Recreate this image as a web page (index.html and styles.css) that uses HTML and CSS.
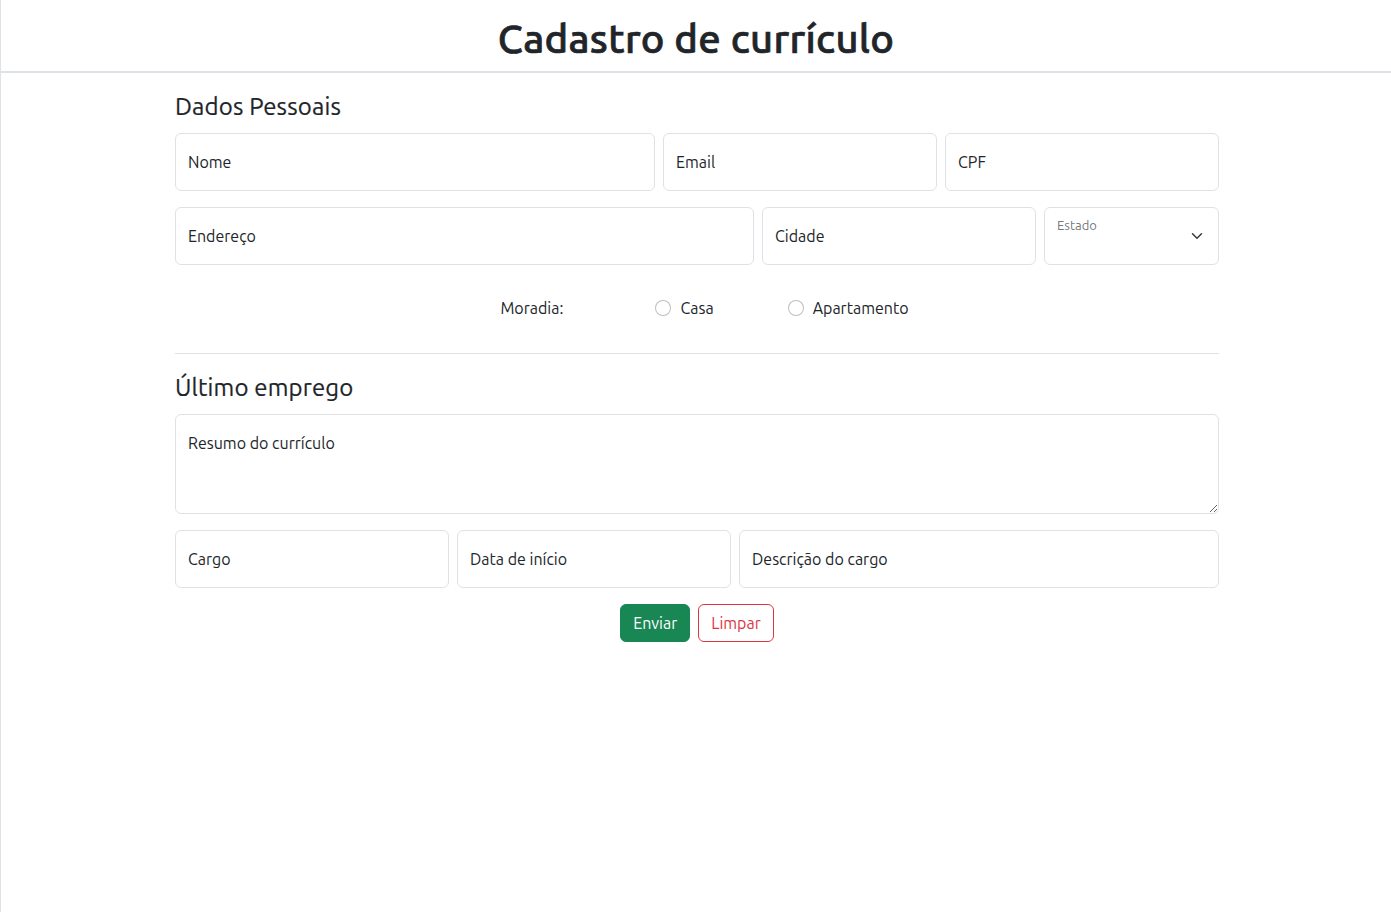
FILE: index.html
```html
<!DOCTYPE html>
<html lang="pt-BR">
<head>
<meta charset="utf-8">
<title>Cadastro de currículo</title>
<link rel="stylesheet" href="styles.css">
</head>
<body>
<header class="page-header">
  <h1 class="page-title">Cadastro de currículo</h1>
</header>
<main class="container">
  <form class="cv-form">
    <section class="section">
      <h4 class="section-title">Dados Pessoais</h4>
      <div class="row row-a">
        <input class="field" type="text" placeholder="Nome">
        <input class="field" type="email" placeholder="Email">
        <input class="field" type="text" placeholder="CPF">
      </div>
      <div class="row row-b">
        <input class="field" type="text" placeholder="Endereço">
        <input class="field" type="text" placeholder="Cidade">
        <div class="select-wrap">
          <select class="field select" aria-label="Estado">
            <option value=""></option>
          </select>
          <span class="select-label">Estado</span>
          <svg class="chevron" width="16" height="12" viewBox="0 0 16 16" aria-hidden="true"><path d="m2 5 6 6 6-6" fill="none" stroke="#343a40" stroke-width="2" stroke-linecap="round" stroke-linejoin="round"/></svg>
        </div>
      </div>
      <div class="moradia">
        <span class="moradia-label">Moradia:</span>
        <label class="check check-casa"><input class="radio" type="radio" name="moradia"> Casa</label>
        <label class="check"><input class="radio" type="radio" name="moradia"> Apartamento</label>
      </div>
    </section>
    <hr class="divider">
    <section class="section">
      <h4 class="section-title">Último emprego</h4>
      <textarea class="field textarea" placeholder="Resumo do currículo"></textarea>
      <div class="row row-c">
        <input class="field" type="text" placeholder="Cargo">
        <input class="field" type="text" placeholder="Data de início">
        <input class="field" type="text" placeholder="Descrição do cargo">
      </div>
      <div class="actions">
        <button type="submit" class="btn btn-success">Enviar</button>
        <button type="reset" class="btn btn-outline-danger">Limpar</button>
      </div>
    </section>
  </form>
</main>
</body>
</html>
```
FILE: styles.css
```css
* { box-sizing: border-box; }

html, body { height: 100%; }

body {
  margin: 0;
  border-left: 1px solid #dee2e6;
  font-family: "Ubuntu", Roboto, "Noto Sans", sans-serif;
  font-size: 16px;
  color: #212529;
  background: #fff;
}

.page-header {
  border-bottom: 2px solid #dee2e6;
  padding: 15px 0 8px;
  text-align: center;
}

.page-title {
  margin: 0;
  font-size: 40px;
  line-height: 48px;
  font-weight: 500;
  letter-spacing: 0.3px;
  -webkit-text-stroke: 0.7px #212529;
}

.container {
  width: 1044px;
  margin: 0 auto;
  position: relative;
  left: 1px;
}

.section-title {
  margin: 0 0 12px;
  font-size: 24px;
  line-height: 29px;
  font-weight: 400;
  letter-spacing: 0.15px;
  -webkit-text-stroke: 0.2px #212529;
}

.section:first-child { padding-top: 19px; }

.row {
  display: grid;
  gap: 8px;
  margin-bottom: 16px;
}
.row-a { grid-template-columns: 480px 274px 274px; }
.row-b { grid-template-columns: 579px 274px 175px; }
.row-c { grid-template-columns: 274px 274px 480px; }

.field {
  display: block;
  width: 100%;
  height: 58px;
  padding: 0 12px;
  border: 1px solid #dee2e6;
  border-radius: 6px;
  font-family: inherit;
  font-size: 16px;
  color: #212529;
  background: #fff;
  outline: none;
}
.field::placeholder { color: #212529; opacity: 1; }

.select-wrap { position: relative; }
.select {
  appearance: none;
  -webkit-appearance: none;
}
.select-label {
  position: absolute;
  left: 13px;
  top: 10px;
  font-size: 13px;
  line-height: 16px;
  color: rgba(33, 37, 41, 0.65);
  pointer-events: none;
}
.chevron {
  position: absolute;
  right: 14px;
  top: 23px;
  pointer-events: none;
}

.moradia {
  display: flex;
  align-items: center;
  justify-content: center;
  height: 54px;
  padding-left: 15px;
}
.moradia-label { margin-right: 92px; }
.check {
  display: flex;
  align-items: center;
  gap: 9px;
}
.check-casa { margin-right: 74px; }
.radio {
  appearance: none;
  -webkit-appearance: none;
  width: 16px;
  height: 16px;
  margin: 0;
  border: 1px solid rgba(0, 0, 0, 0.25);
  border-radius: 50%;
  background: #fff;
}

.divider {
  margin: 18px 0 19px;
  border: 0;
  border-top: 1px solid #dee2e6;
}

.textarea {
  height: 100px;
  padding: 16px 12px;
  line-height: 24px;
  resize: vertical;
  margin-bottom: 16px;
}

.actions {
  display: flex;
  justify-content: center;
  gap: 8px;
}

.btn {
  height: 38px;
  padding: 0 12px;
  border-radius: 6px;
  font-family: inherit;
  font-size: 16px;
  line-height: 24px;
  cursor: pointer;
}
.btn-success {
  background: #198754;
  border: 1px solid #198754;
  color: #fff;
}
.btn-outline-danger {
  background: #fff;
  border: 1px solid #dc3545;
  color: #dc3545;
}
```
